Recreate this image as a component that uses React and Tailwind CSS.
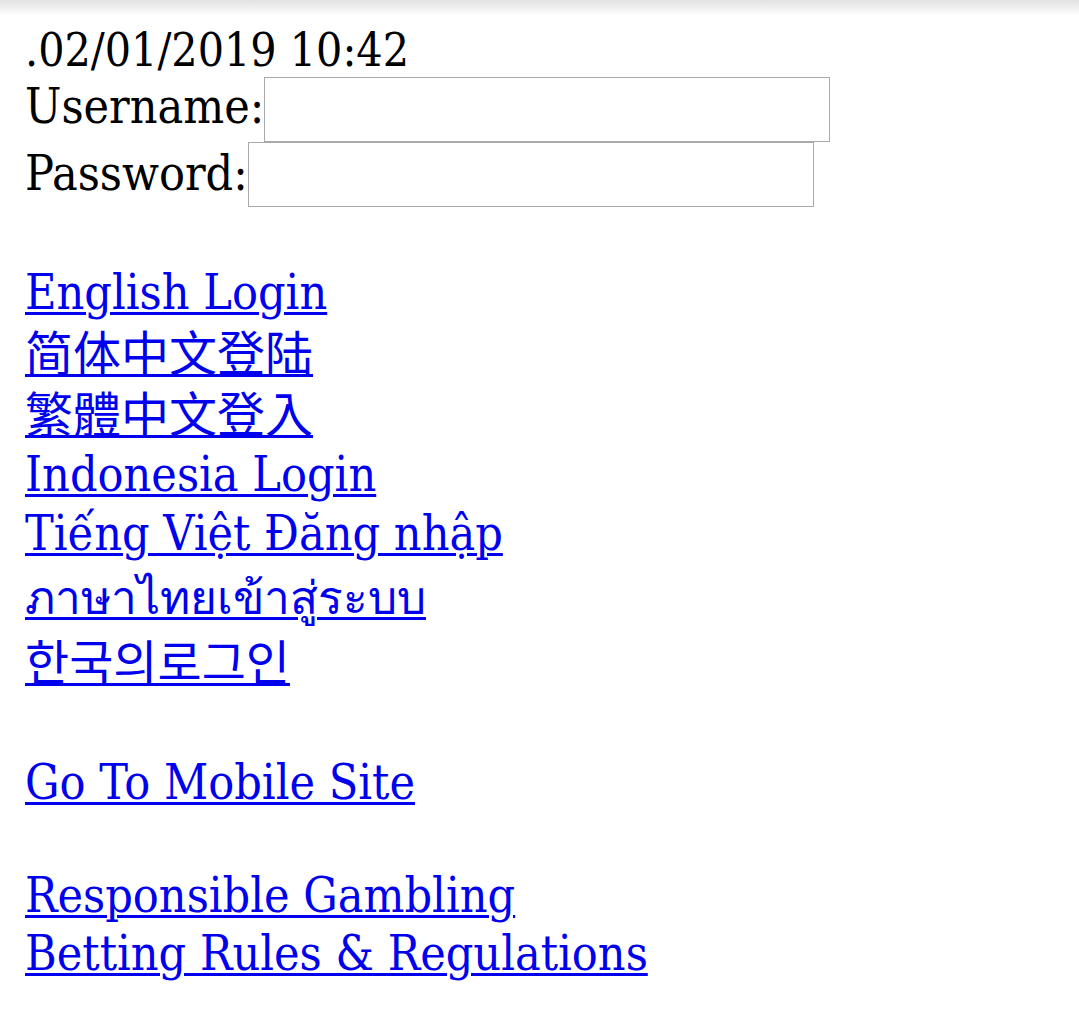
import React from 'react';

const LINKS = [
  { text: 'English Login', cls: 'mt-0' },
  { text: '简体中文登陆', cls: 'mt-[4px] font-["DejaVu_Serif_Condensed","DejaVu_Serif","Noto_Sans_CJK_SC",serif]' },
  { text: '繁體中文登入', cls: 'mt-[3px] font-["DejaVu_Serif_Condensed","DejaVu_Serif","Noto_Sans_CJK_TC",serif]' },
  { text: 'Indonesia Login', cls: 'mt-[1px]' },
  { text: 'Tiếng Việt Đăng nhập', cls: 'mt-[1px]' },
  { text: 'ภาษาไทยเข้าสู่ระบบ', cls: 'mt-[7px] text-[46px]' },
  { text: '한국의로그인', cls: 'mt-[7px] font-["DejaVu_Serif_Condensed","DejaVu_Serif","Noto_Sans_CJK_KR",serif]' },
];

const App = () => {
  return (
    <div className="min-h-screen bg-white text-black font-['DejaVu_Serif_Condensed','DejaVu_Serif','Noto_Sans_CJK_SC',serif] text-[48px]">
      {/* browser toolbar shadow */}
      <div className="h-[16px] bg-gradient-to-b from-[#e2e2e2] to-white" />

      <div className="px-[25px] pt-[7px]">
        <div className="leading-[54px] text-[46px] whitespace-nowrap">.02/01/2019 10:42</div>

        {/* Login form */}
        <div className="flex items-start h-[65px]">
          <span className="leading-[58px] whitespace-nowrap">Username:</span>
          <input type="text" className="w-[566px] h-[65px] border border-[#a9a9a9] bg-white outline-none" />
        </div>
        <div className="flex items-start h-[65px]">
          <span className="leading-[62px] whitespace-nowrap">Password:</span>
          <input type="password" className="w-[566px] h-[65px] border border-[#a9a9a9] bg-white outline-none" />
        </div>

        <div className="h-[56px]" />

        {/* Language links */}
        {LINKS.map((l) => (
          <div key={l.text} className={`leading-[58px] ${l.cls}`}>
            <a href="#" className="text-[#0000ee] underline decoration-[3px] underline-offset-[3px] whitespace-nowrap">{l.text}</a>
          </div>
        ))}

        <div className="leading-[58px] mt-[61px]">
          <a href="#" className="text-[#0000ee] underline decoration-[3px] underline-offset-[3px]">Go To Mobile Site</a>
        </div>

        <div className="leading-[58px] mt-[55px]">
          <a href="#" className="text-[#0000ee] underline decoration-[3px] underline-offset-[3px]">Responsible Gambling</a>
        </div>
        <div className="leading-[58px]">
          <a href="#" className="text-[#0000ee] underline decoration-[3px] underline-offset-[3px]">Betting Rules &amp; Regulations</a>
        </div>
      </div>
    </div>
  );
};

export default App;
